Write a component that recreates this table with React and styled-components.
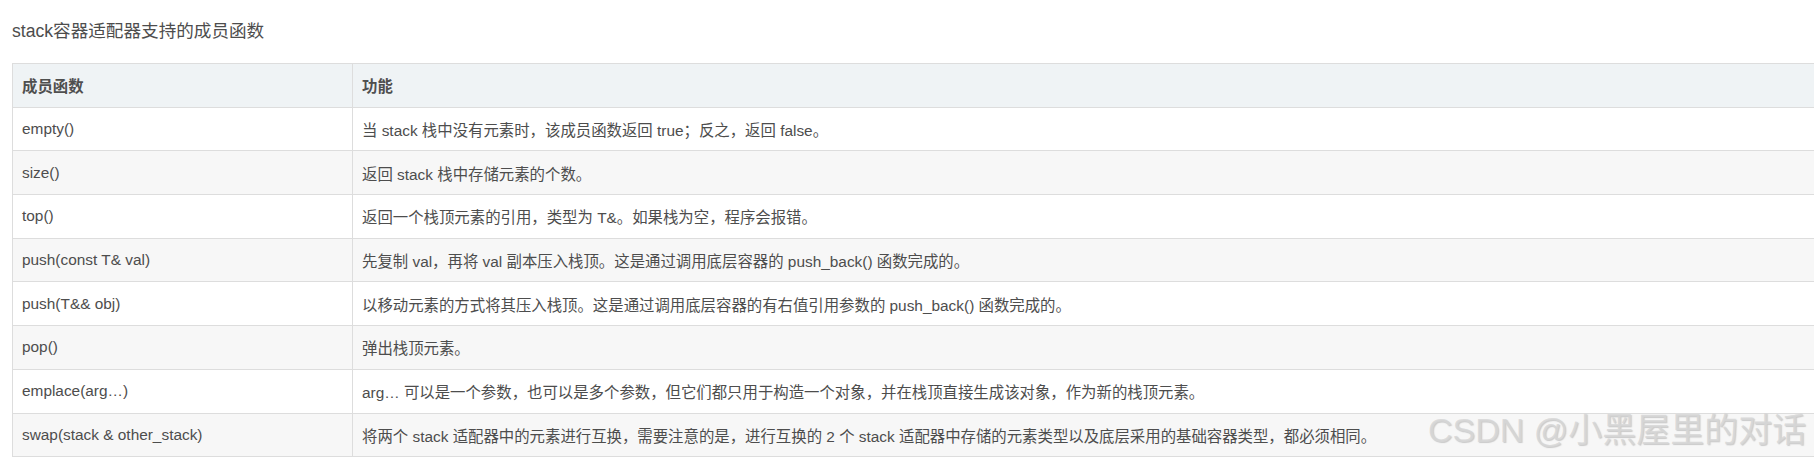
import React from "react";
import styled, { createGlobalStyle } from "styled-components";

const Global = createGlobalStyle`
  html, body { margin: 0; padding: 0; background: #fff; overflow: hidden; }
  body { font-family: "Liberation Sans", Arial, "Noto Sans CJK SC", sans-serif; }
`;

const Page = styled.div`
  position: relative;
  width: 1814px;
  height: 462px;
  padding: 18px 0 0 12px;
  box-sizing: border-box;
  overflow: hidden;
`;

const Title = styled.p`
  margin: 0 0 18px;
  font-size: 17.6px;
  line-height: 27px;
  color: #4d4d4d;
`;

const Table = styled.table`
  border-collapse: collapse;
  width: 1820px;
  table-layout: fixed;
  font-size: 15.4px;
  color: #4d4d4d;
`;

const Row = styled.tr`
  background: ${(p) => (p.$head ? "#eff3f5" : p.$alt ? "#f7f7f7" : "#ffffff")};
`;

const Cell = styled.td`
  border: 1px solid #dddddd;
  height: 42.7px;
  padding: 0 9px;
  text-align: left;
  vertical-align: middle;
  white-space: nowrap;
  font-weight: ${(p) => (p.$head ? 700 : 400)};
  color: ${(p) => (p.$head ? "#4f4f4f" : "#4d4d4d")};
`;

const Watermark = styled.div`
  position: absolute;
  left: 1428px;
  top: 413px;
  font-size: 34px;
  line-height: 34px;
  white-space: nowrap;
  color: rgba(215, 215, 215, 0.85);
  text-shadow: 1px 1px 1px rgba(120, 120, 120, 0.35);
  pointer-events: none;
`;

const rows = [
  ["empty()", "当 stack 栈中没有元素时，该成员函数返回 true；反之，返回 false。"],
  ["size()", "返回 stack 栈中存储元素的个数。"],
  ["top()", "返回一个栈顶元素的引用，类型为 T&。如果栈为空，程序会报错。"],
  ["push(const T& val)", "先复制 val，再将 val 副本压入栈顶。这是通过调用底层容器的 push_back() 函数完成的。"],
  ["push(T&& obj)", "以移动元素的方式将其压入栈顶。这是通过调用底层容器的有右值引用参数的 push_back() 函数完成的。"],
  ["pop()", "弹出栈顶元素。"],
  ["emplace(arg…)", "arg… 可以是一个参数，也可以是多个参数，但它们都只用于构造一个对象，并在栈顶直接生成该对象，作为新的栈顶元素。"],
  ["swap(stack & other_stack)", "将两个 stack 适配器中的元素进行互换，需要注意的是，进行互换的 2 个 stack 适配器中存储的元素类型以及底层采用的基础容器类型，都必须相同。"],
];

export default function App() {
  return (
    <>
      <Global />
      <Page>
        <Title>stack容器适配器支持的成员函数</Title>
        <Table>
          <colgroup>
            <col style={{ width: "340px" }} />
            <col />
          </colgroup>
          <tbody>
            <Row $head>
              <Cell $head>成员函数</Cell>
              <Cell $head>功能</Cell>
            </Row>
            {rows.map(([fn, desc], i) => (
              <Row key={fn} $alt={i % 2 === 1}>
                <Cell>{fn}</Cell>
                <Cell>{desc}</Cell>
              </Row>
            ))}
          </tbody>
        </Table>
        <Watermark>CSDN @小黑屋里的对话</Watermark>
      </Page>
    </>
  );
}
